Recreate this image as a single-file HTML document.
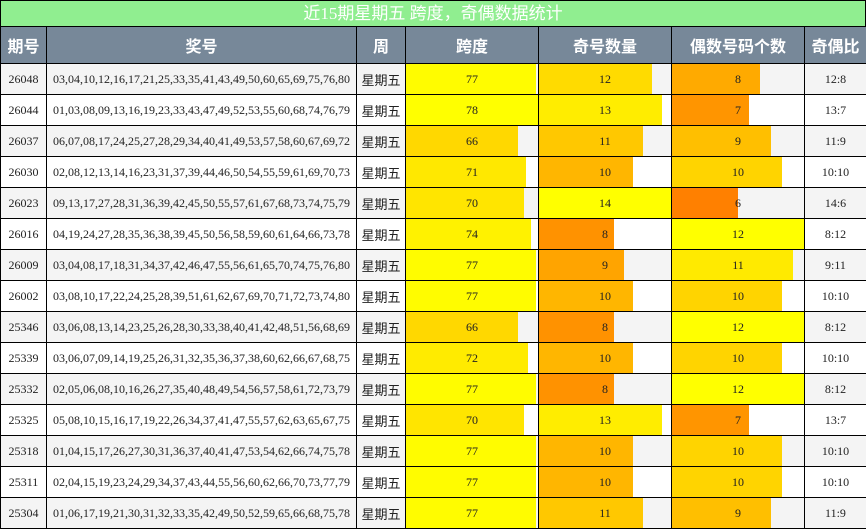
<!DOCTYPE html>
<html><head><meta charset="utf-8"><style>
*{margin:0;padding:0;box-sizing:border-box}
body{width:866px;height:529px;background:#fff;font-family:"Liberation Serif","Noto Sans CJK SC",serif;overflow:hidden}
.title{height:27px;background:#90ee90;border:1px solid #000;color:#fff;text-align:center;font:17px/25px "Liberation Serif","Noto Sans CJK SC",sans-serif;width:866px}
table{border-collapse:collapse;table-layout:fixed;width:866px;margin-top:-1px}
td,th{border:1px solid #000;text-align:center;font-size:12px;color:#222;padding:0;height:31px;position:relative}
th{background:#778899;color:#fff;font:bold 16px "Liberation Sans","Noto Sans CJK SC",sans-serif;height:37px}
tr.g td{background:#f4f4f4}
.w{font-family:"Liberation Sans","Noto Sans CJK SC",sans-serif;font-size:13px}
.b{position:absolute;left:0;top:0;bottom:0}
.v{position:relative}
</style></head><body>
<div class="title">近15期星期五 跨度，奇偶数据统计</div>
<table>
<colgroup><col style="width:46px"><col style="width:310px"><col style="width:49px"><col style="width:133px"><col style="width:133px"><col style="width:133px"><col style="width:62px"></colgroup>
<tr><th>期号</th><th>奖号</th><th>周</th><th>跨度</th><th>奇号数量</th><th>偶数号码个数</th><th>奇偶比</th></tr>
<tr class="g"><td>26048</td><td>03,04,10,12,16,17,21,25,33,35,41,43,49,50,60,65,69,75,76,80</td><td class="w">星期五</td><td><div class="b" style="width:98.7%;background:#fffc00"></div><span class="v">77</span></td><td><div class="b" style="width:85.7%;background:#ffdb00"></div><span class="v">12</span></td><td><div class="b" style="width:66.7%;background:#ffaa00"></div><span class="v">8</span></td><td>12:8</td></tr>
<tr><td>26044</td><td>01,03,08,09,13,16,19,23,33,43,47,49,52,53,55,60,68,74,76,79</td><td class="w">星期五</td><td><div class="b" style="width:100%;background:#ffff00"></div><span class="v">78</span></td><td><div class="b" style="width:92.9%;background:#ffed00"></div><span class="v">13</span></td><td><div class="b" style="width:58.3%;background:#ff9500"></div><span class="v">7</span></td><td>13:7</td></tr>
<tr class="g"><td>26037</td><td>06,07,08,17,24,25,27,28,29,34,40,41,49,53,57,58,60,67,69,72</td><td class="w">星期五</td><td><div class="b" style="width:84.6%;background:#ffd800"></div><span class="v">66</span></td><td><div class="b" style="width:78.6%;background:#ffc800"></div><span class="v">11</span></td><td><div class="b" style="width:75%;background:#ffbf00"></div><span class="v">9</span></td><td>11:9</td></tr>
<tr><td>26030</td><td>02,08,12,13,14,16,23,31,37,39,44,46,50,54,55,59,61,69,70,73</td><td class="w">星期五</td><td><div class="b" style="width:91%;background:#ffe800"></div><span class="v">71</span></td><td><div class="b" style="width:71.4%;background:#ffb600"></div><span class="v">10</span></td><td><div class="b" style="width:83.3%;background:#ffd400"></div><span class="v">10</span></td><td>10:10</td></tr>
<tr class="g"><td>26023</td><td>09,13,17,27,28,31,36,39,42,45,50,55,57,61,67,68,73,74,75,79</td><td class="w">星期五</td><td><div class="b" style="width:89.7%;background:#ffe500"></div><span class="v">70</span></td><td><div class="b" style="width:100%;background:#ffff00"></div><span class="v">14</span></td><td><div class="b" style="width:50%;background:#ff8000"></div><span class="v">6</span></td><td>14:6</td></tr>
<tr><td>26016</td><td>04,19,24,27,28,35,36,38,39,45,50,56,58,59,60,61,64,66,73,78</td><td class="w">星期五</td><td><div class="b" style="width:94.9%;background:#fff200"></div><span class="v">74</span></td><td><div class="b" style="width:57.1%;background:#ff9200"></div><span class="v">8</span></td><td><div class="b" style="width:100%;background:#ffff00"></div><span class="v">12</span></td><td>8:12</td></tr>
<tr class="g"><td>26009</td><td>03,04,08,17,18,31,34,37,42,46,47,55,56,61,65,70,74,75,76,80</td><td class="w">星期五</td><td><div class="b" style="width:98.7%;background:#fffc00"></div><span class="v">77</span></td><td><div class="b" style="width:64.3%;background:#ffa400"></div><span class="v">9</span></td><td><div class="b" style="width:91.7%;background:#ffea00"></div><span class="v">11</span></td><td>9:11</td></tr>
<tr><td>26002</td><td>03,08,10,17,22,24,25,28,39,51,61,62,67,69,70,71,72,73,74,80</td><td class="w">星期五</td><td><div class="b" style="width:98.7%;background:#fffc00"></div><span class="v">77</span></td><td><div class="b" style="width:71.4%;background:#ffb600"></div><span class="v">10</span></td><td><div class="b" style="width:83.3%;background:#ffd400"></div><span class="v">10</span></td><td>10:10</td></tr>
<tr class="g"><td>25346</td><td>03,06,08,13,14,23,25,26,28,30,33,38,40,41,42,48,51,56,68,69</td><td class="w">星期五</td><td><div class="b" style="width:84.6%;background:#ffd800"></div><span class="v">66</span></td><td><div class="b" style="width:57.1%;background:#ff9200"></div><span class="v">8</span></td><td><div class="b" style="width:100%;background:#ffff00"></div><span class="v">12</span></td><td>8:12</td></tr>
<tr><td>25339</td><td>03,06,07,09,14,19,25,26,31,32,35,36,37,38,60,62,66,67,68,75</td><td class="w">星期五</td><td><div class="b" style="width:92.3%;background:#ffeb00"></div><span class="v">72</span></td><td><div class="b" style="width:71.4%;background:#ffb600"></div><span class="v">10</span></td><td><div class="b" style="width:83.3%;background:#ffd400"></div><span class="v">10</span></td><td>10:10</td></tr>
<tr class="g"><td>25332</td><td>02,05,06,08,10,16,26,27,35,40,48,49,54,56,57,58,61,72,73,79</td><td class="w">星期五</td><td><div class="b" style="width:98.7%;background:#fffc00"></div><span class="v">77</span></td><td><div class="b" style="width:57.1%;background:#ff9200"></div><span class="v">8</span></td><td><div class="b" style="width:100%;background:#ffff00"></div><span class="v">12</span></td><td>8:12</td></tr>
<tr><td>25325</td><td>05,08,10,15,16,17,19,22,26,34,37,41,47,55,57,62,63,65,67,75</td><td class="w">星期五</td><td><div class="b" style="width:89.7%;background:#ffe500"></div><span class="v">70</span></td><td><div class="b" style="width:92.9%;background:#ffed00"></div><span class="v">13</span></td><td><div class="b" style="width:58.3%;background:#ff9500"></div><span class="v">7</span></td><td>13:7</td></tr>
<tr class="g"><td>25318</td><td>01,04,15,17,26,27,30,31,36,37,40,41,47,53,54,62,66,74,75,78</td><td class="w">星期五</td><td><div class="b" style="width:98.7%;background:#fffc00"></div><span class="v">77</span></td><td><div class="b" style="width:71.4%;background:#ffb600"></div><span class="v">10</span></td><td><div class="b" style="width:83.3%;background:#ffd400"></div><span class="v">10</span></td><td>10:10</td></tr>
<tr><td>25311</td><td>02,04,15,19,23,24,29,34,37,43,44,55,56,60,62,66,70,73,77,79</td><td class="w">星期五</td><td><div class="b" style="width:98.7%;background:#fffc00"></div><span class="v">77</span></td><td><div class="b" style="width:71.4%;background:#ffb600"></div><span class="v">10</span></td><td><div class="b" style="width:83.3%;background:#ffd400"></div><span class="v">10</span></td><td>10:10</td></tr>
<tr class="g"><td>25304</td><td>01,06,17,19,21,30,31,32,33,35,42,49,50,52,59,65,66,68,75,78</td><td class="w">星期五</td><td><div class="b" style="width:98.7%;background:#fffc00"></div><span class="v">77</span></td><td><div class="b" style="width:78.6%;background:#ffc800"></div><span class="v">11</span></td><td><div class="b" style="width:75%;background:#ffbf00"></div><span class="v">9</span></td><td>11:9</td></tr>
</table>
</body></html>
